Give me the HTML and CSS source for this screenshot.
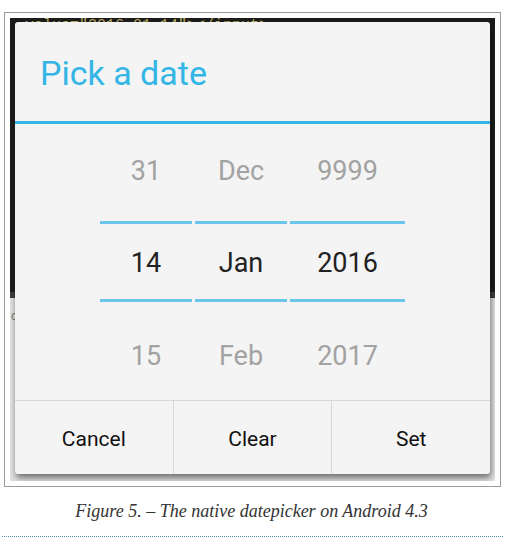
FILE: index.html
```html
<!DOCTYPE html>
<html>
<head>
<meta charset="utf-8">
<link rel="stylesheet" href="styles.css">
</head>
<body>
<figure class="figure">
  <div class="shot">
    <div class="shot-dark">
      <div class="code">value="2016-01-14"&gt;&lt;/input&gt;</div>
    </div>
    <div class="shot-band"></div>
    <div class="shot-light"><span class="peek">code</span></div>

    <div class="dialog">
      <div class="title">Pick a date</div>
      <div class="title-rule"></div>
      <div class="picker">
        <div class="col col-day">
          <div class="cell cell-top">31</div>
          <div class="divider"></div>
          <div class="cell cell-mid">14</div>
          <div class="divider"></div>
          <div class="cell cell-bot">15</div>
        </div>
        <div class="col col-month">
          <div class="cell cell-top">Dec</div>
          <div class="divider"></div>
          <div class="cell cell-mid">Jan</div>
          <div class="divider"></div>
          <div class="cell cell-bot">Feb</div>
        </div>
        <div class="col col-year">
          <div class="cell cell-top">9999</div>
          <div class="divider"></div>
          <div class="cell cell-mid">2016</div>
          <div class="divider"></div>
          <div class="cell cell-bot">2017</div>
        </div>
      </div>
      <div class="buttons">
        <div class="btn">Cancel</div>
        <div class="btn">Clear</div>
        <div class="btn">Set</div>
      </div>
    </div>
  </div>
</figure>
<div class="caption">Figure 5. – The native datepicker on Android 4.3</div>
<div class="rule"></div>
</body>
</html>
```
FILE: styles.css
```css
html, body {
  margin: 0;
  padding: 0;
  background: #ffffff;
}

.figure {
  margin: 12px 0 0 4px;
  width: 497px;
  height: 475px;
  box-sizing: border-box;
  border: 1px solid #9a9a9a;
  padding: 5px;
}

.shot {
  position: relative;
  width: 485px;
  height: 463px;
  display: flex;
  flex-direction: column;
  overflow: hidden;
}

.shot-dark {
  height: 274px;
  background: #1c1c1c;
  overflow: hidden;
}

.code {
  margin: -1px 0 0 15px;
  font-family: "Liberation Mono", monospace;
  font-size: 15px;
  line-height: 17px;
  color: #b9aa62;
  white-space: nowrap;
}

.shot-band {
  height: 6px;
  background: #3e3e3e;
}

.shot-light {
  flex: 1;
  background: #e2e2e2;
  padding: 8px 0 0 1px;
}

.peek {
  font-family: "Liberation Sans", sans-serif;
  font-size: 12px;
  color: #777;
}

.dialog {
  position: absolute;
  left: 5px;
  top: 4px;
  width: 475px;
  height: 452px;
  background: #f4f4f4;
  border-radius: 3px;
  box-shadow: 1px 4px 6px rgba(0, 0, 0, 0.5);
  display: flex;
  flex-direction: column;
  font-family: Roboto, "Noto Sans", sans-serif;
}

.title {
  height: 96px;
  padding-top: 3px;
  line-height: 96px;
  padding-left: 25px;
  font-size: 34px;
  color: #33b5e5;
}

.title-rule {
  height: 3px;
  background: #33b5e5;
}

.picker {
  display: flex;
  gap: 3px;
  padding-left: 85px;
  height: 276px;
}

.col {
  display: flex;
  flex-direction: column;
}

.col-day, .col-month { width: 92px; }
.col-year { width: 115px; }

.divider {
  height: 3px;
  background: #6cc6ec;
}

.cell {
  text-align: center;
  font-size: 27px;
  color: #a2a2a2;
}

.cell-top {
  height: 97px;
  line-height: 94px;
}

.cell-mid {
  height: 75px;
  line-height: 79px;
  color: #222222;
}

.cell-bot {
  height: 98px;
  padding-top: 8px;
  box-sizing: border-box;
  line-height: 92px;
}

.buttons {
  flex: 1;
  display: flex;
  border-top: 1px solid #d8d8d8;
}

.btn {
  flex: 1;
  display: flex;
  align-items: center;
  justify-content: center;
  padding-top: 2px;
  font-size: 21px;
  color: #111111;
}

.btn + .btn {
  border-left: 1px solid #d8d8d8;
}

.caption {
  margin-top: 12px;
  text-align: center;
  font-family: "Liberation Serif", serif;
  font-style: italic;
  font-size: 18px;
  line-height: 25px;
  color: #333333;
  padding-right: 2px;
}

.rule {
  margin: 12px 2px 0 2px;
  border-top: 1px dotted #4a97b3;
}
```
